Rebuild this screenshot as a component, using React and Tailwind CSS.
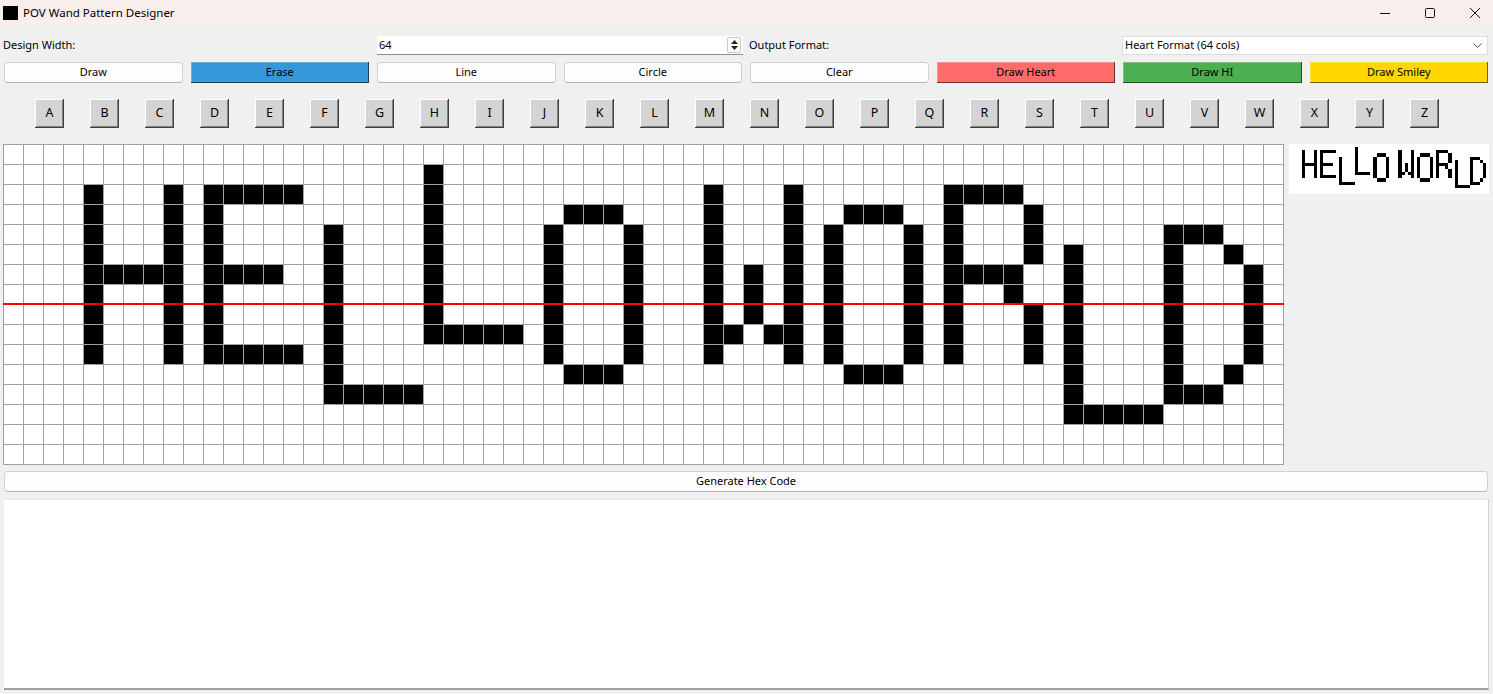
import React from "react";

const ROWS = 16;
const COLS = 64;

function buildPattern() {
  const set = new Set();
  const v = (c, r0, r1) => { for (let r = r0; r <= r1; r++) set.add(r * COLS + c); };
  const h = (r, c0, c1) => { for (let c = c0; c <= c1; c++) set.add(r * COLS + c); };
  // H
  v(4, 2, 10); v(8, 2, 10); h(6, 5, 7);
  // E
  v(10, 2, 10); h(2, 11, 14); h(6, 11, 13); h(10, 11, 14);
  // L
  v(16, 4, 12); h(12, 17, 20);
  // L
  v(21, 1, 9); h(9, 22, 25);
  // O
  v(27, 4, 10); h(3, 28, 30); v(31, 4, 10); h(11, 28, 30);
  // W
  v(35, 2, 10); v(39, 2, 10); v(37, 6, 8); h(9, 36, 36); h(9, 38, 38);
  // O
  v(41, 4, 10); h(3, 42, 44); v(45, 4, 10); h(11, 42, 44);
  // R
  v(47, 2, 10); h(2, 48, 50); v(51, 3, 5); h(6, 48, 50); h(7, 50, 50); v(51, 8, 10);
  // L
  v(53, 5, 13); h(13, 54, 57);
  // D
  v(58, 4, 12); h(4, 59, 60); h(5, 61, 61); v(62, 6, 10); h(11, 61, 61); h(12, 59, 60);
  return set;
}

const PATTERN = buildPattern();
const CELLS = Array.from({ length: ROWS * COLS }, (_, i) => PATTERN.has(i));
const LETTERS = "ABCDEFGHIJKLMNOPQRSTUVWXYZ".split("");

const flatBtn =
  "h-full rounded-[4px] border border-[#d0d0d0] border-b-[#b5b5b5] bg-[#fdfdfd] text-[11px] text-black flex items-center justify-center";
const colorBtn =
  "h-full text-[11px] text-black flex items-center justify-center shadow-[inset_-1px_-1px_0_rgba(0,0,0,0.55),inset_1px_1px_0_rgba(255,255,255,0.25)]";

export default function App() {
  return (
    <div className="w-[1493px] h-[694px] bg-[#f0f0f0] flex flex-col overflow-hidden font-['Noto_Sans','Open_Sans',sans-serif] text-[11px] text-black">
      {/* Title bar */}
      <div className="h-[26px] bg-[#f8efed] flex items-center shrink-0">
        <div className="ml-[3px] w-[15px] h-[14px] bg-black" />
        <div className="ml-[5px] text-[11.5px] leading-none">POV Wand Pattern Designer</div>
        <div className="ml-auto mr-[13px] flex items-center gap-[35px]">
          <svg width="10" height="10" viewBox="0 0 10 10">
            <line x1="0" y1="5.5" x2="10" y2="5.5" stroke="#111" strokeWidth="1" />
          </svg>
          <svg width="10" height="10" viewBox="0 0 10 10">
            <rect x="0.5" y="0.5" width="9" height="9" rx="1" fill="none" stroke="#111" strokeWidth="1" />
          </svg>
          <svg width="10" height="10" viewBox="0 0 10 10">
            <line x1="0" y1="0" x2="10" y2="10" stroke="#111" strokeWidth="1" />
            <line x1="10" y1="0" x2="0" y2="10" stroke="#111" strokeWidth="1" />
          </svg>
        </div>
      </div>

      {/* Row 1 */}
      <div className="mt-[10px] h-[19px] ml-[3px] grid grid-cols-[374px_372px_373px_366px] items-center shrink-0">
        <div>Design Width:</div>
        <div className="w-[366px] h-[19px] bg-white border-b border-[#8a8a8a] flex items-center relative">
          <span className="ml-[2px]">64</span>
          <div className="absolute right-[2px] top-[1px] w-[14px] h-[16px] rounded-[2px] border border-[#c8c8c8] bg-[#fafafa] flex flex-col items-center justify-center gap-[2px]">
            <svg width="7" height="4" viewBox="0 0 7 4"><path d="M0 4 L3.5 0 L7 4 Z" fill="#222" /></svg>
            <svg width="7" height="4" viewBox="0 0 7 4"><path d="M0 0 L3.5 4 L7 0 Z" fill="#222" /></svg>
          </div>
        </div>
        <div>Output Format:</div>
        <div className="h-[19px] bg-white border border-[#dcdcdc] flex items-center justify-between">
          <span className="ml-[2px]">Heart Format (64 cols)</span>
          <svg className="mr-[5px]" width="9" height="5" viewBox="0 0 9 5">
            <path d="M0.5 0.5 L4.5 4.5 L8.5 0.5" fill="none" stroke="#555" strokeWidth="1" />
          </svg>
        </div>
      </div>

      {/* Row 2: tools */}
      <div className="mt-[7px] h-[21px] ml-[4px] mr-[5px] grid grid-cols-8 gap-[8px] shrink-0">
        <div className={flatBtn}>Draw</div>
        <div className={`${colorBtn} bg-[#3498db]`}>Erase</div>
        <div className={flatBtn}>Line</div>
        <div className={flatBtn}>Circle</div>
        <div className={flatBtn}>Clear</div>
        <div className={`${colorBtn} bg-[#ff6b6b]`}>Draw Heart</div>
        <div className={`${colorBtn} bg-[#4caf50]`}>Draw HI</div>
        <div className={`${colorBtn} bg-[#ffd700]`}>Draw Smiley</div>
      </div>

      {/* Row 3: letters */}
      <div className="mt-[16px] h-[29px] pl-[35px] flex gap-[26px] shrink-0">
        {LETTERS.map((l) => (
          <div
            key={l}
            className="w-[29px] h-[29px] bg-[#d4d4d4] flex items-center justify-center text-[12.5px] shadow-[inset_-1px_-1px_0_#404040,inset_1px_1px_0_#ffffff,inset_-2px_-2px_0_#808080]"
          >
            {l}
          </div>
        ))}
      </div>

      {/* Grid + preview */}
      <div className="mt-[16px] flex items-start shrink-0">
        <div className="ml-[3px] relative">
          <div className="grid grid-cols-[repeat(64,19px)] grid-rows-[repeat(16,19px)] gap-px p-px bg-[#a0a0a0]">
            {CELLS.map((on, i) => (
              <div key={i} className={on ? "bg-black" : "bg-white"} />
            ))}
          </div>
          <div className="absolute left-0 right-0 top-[159px] h-[2px] bg-[#ff0000]" />
        </div>
        <div className="ml-[5px] w-[200px] h-[50px] bg-white">
          <svg width="200" height="50" viewBox="0 0 64 16" preserveAspectRatio="none" shapeRendering="crispEdges">
            {CELLS.map((on, i) =>
              on ? <rect key={i} x={i % COLS} y={Math.floor(i / COLS)} width="1" height="1" fill="#000" /> : null
            )}
          </svg>
        </div>
      </div>

      {/* Generate */}
      <div className="mt-[6px] h-[21px] ml-[4px] mr-[5px] shrink-0">
        <div className={flatBtn}>Generate Hex Code</div>
      </div>

      {/* Output text area */}
      <div className="mt-[7px] h-[191px] ml-[4px] mr-[4px] bg-white border-t border-[#e6e6e6] border-b-2 border-b-[#a0a0a0] border-r border-r-[#d0d0d0] shrink-0" />
    </div>
  );
}
